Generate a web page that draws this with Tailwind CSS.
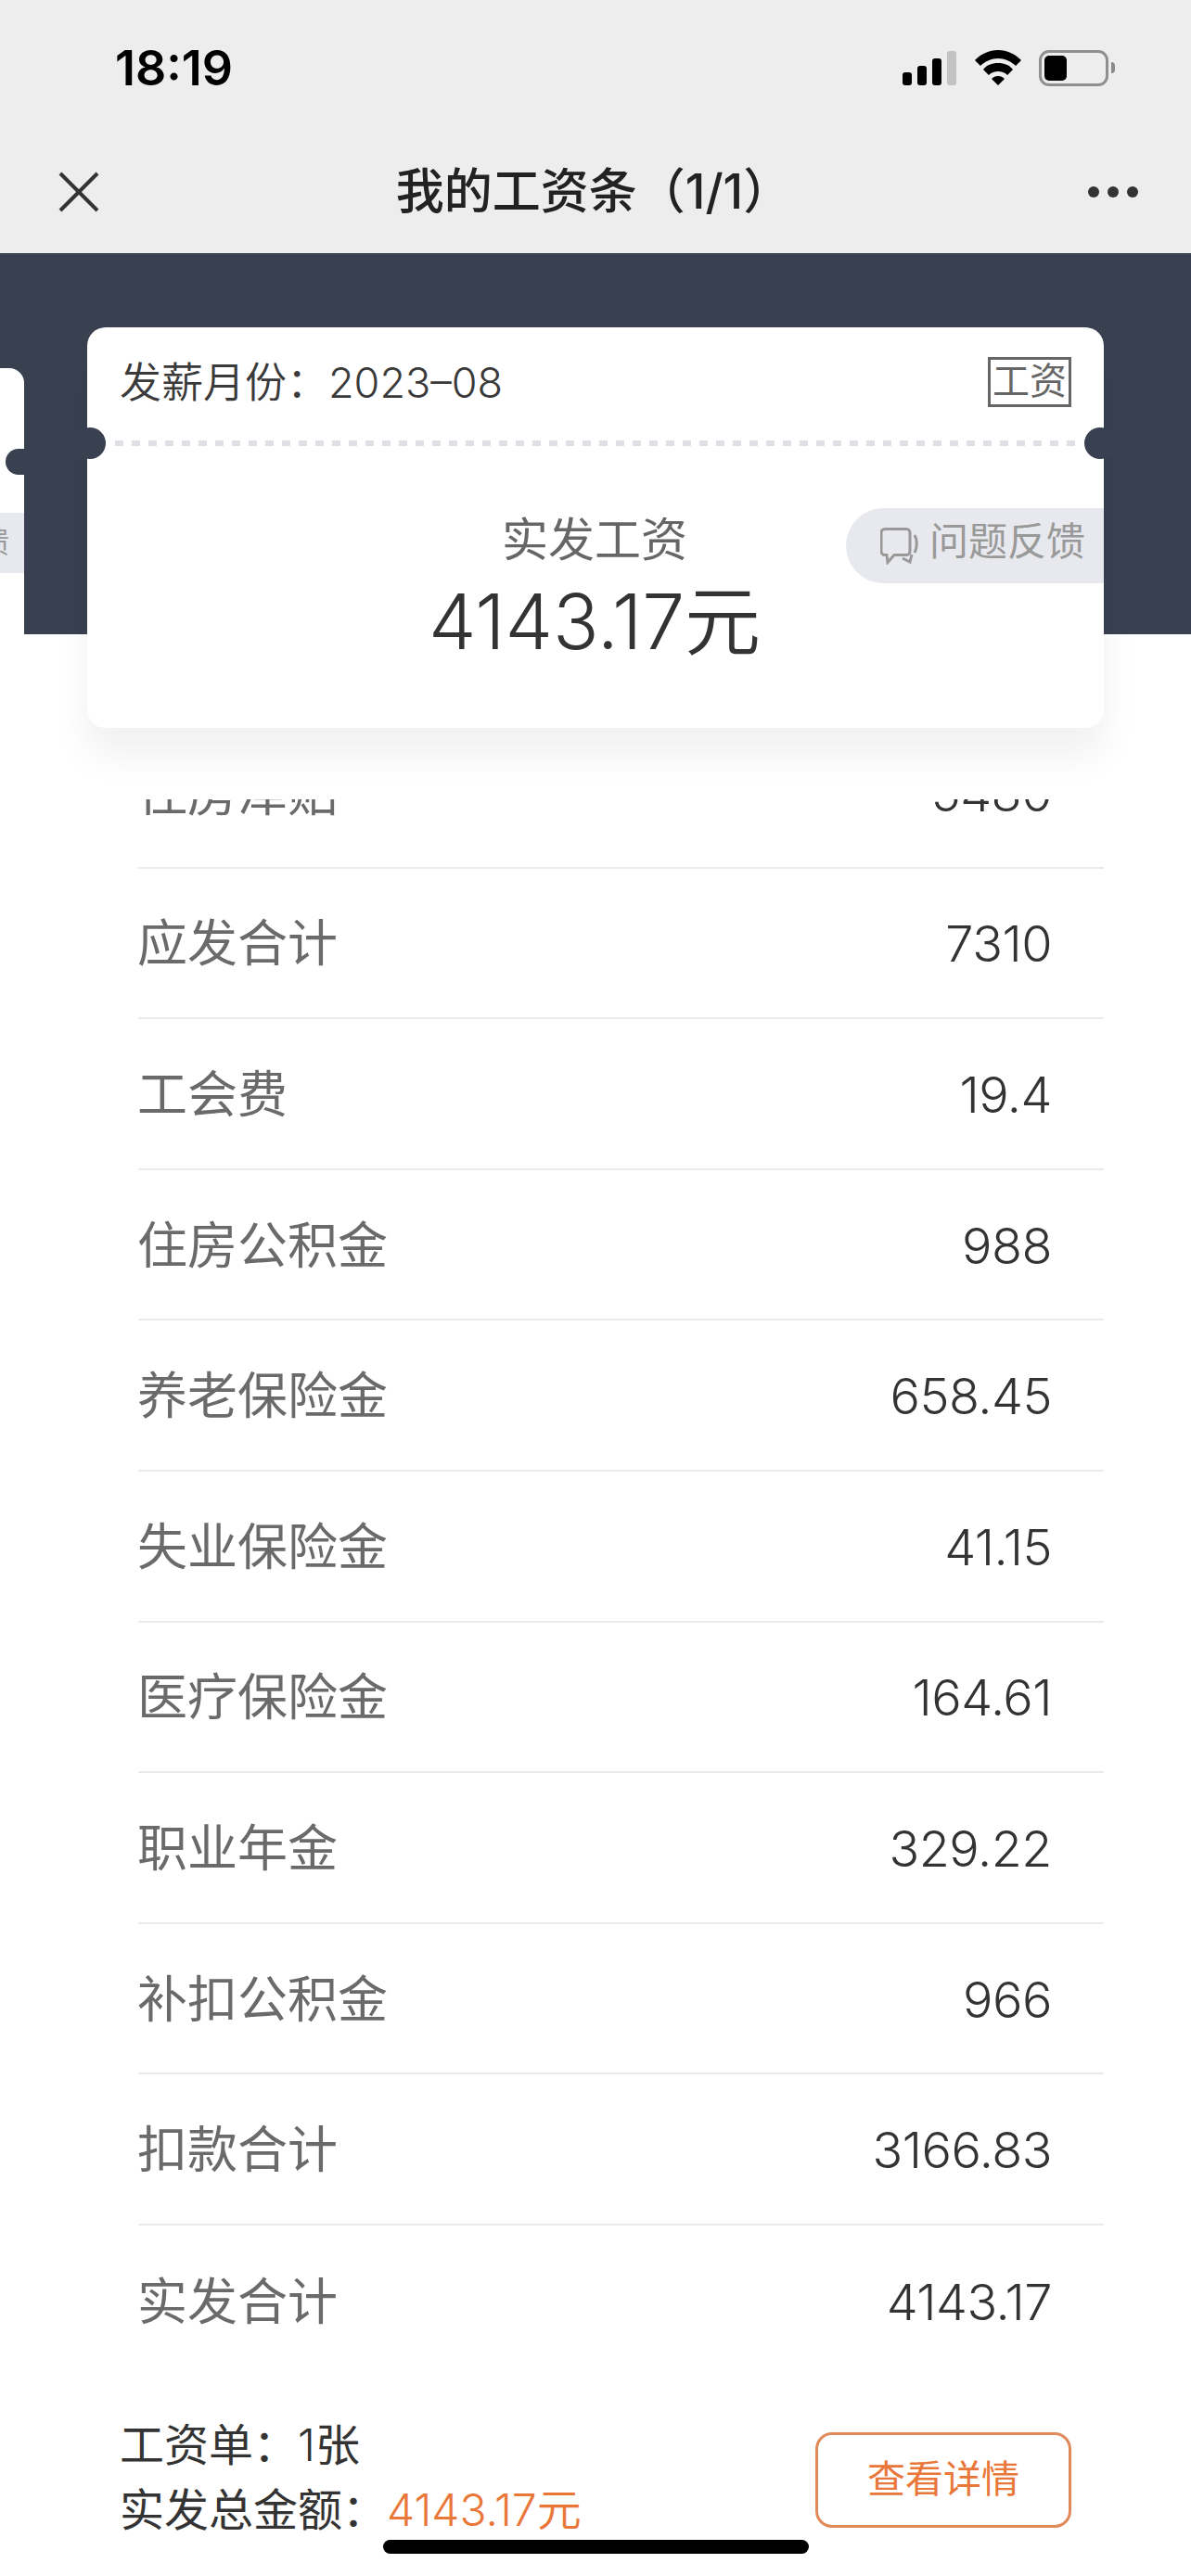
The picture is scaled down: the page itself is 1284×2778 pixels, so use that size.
<!DOCTYPE html><html lang="zh-CN"><head>
<meta charset="UTF-8">
<title>我的工资条</title>
<meta name="viewport" content="width=device-width,initial-scale=1">
<script src="https://cdn.jsdelivr.net/npm/@tailwindcss/browser@4"></script>
</head><body class="w-[1284px] h-[2778px] overflow-hidden relative bg-white text-[#333] font-['Inter','Noto_Sans_CJK_SC',sans-serif]">

<!-- status + nav -->
<header class="h-[273px] bg-[#ededed] flex flex-col">
  <div class="h-[146px] pl-[124px] pr-[82px] flex items-center justify-between">
    <span class="text-[52px] font-semibold leading-none text-black pt-[2px]">18:19</span>
    <div class="flex items-center gap-[20px]">
      <svg width="58" height="37" viewBox="0 0 58 37"><rect x="0" y="23" width="10" height="14" rx="3"/><rect x="16" y="16" width="10" height="21" rx="3"/><rect x="32" y="8" width="10" height="29" rx="3"/><rect x="48" y="0" width="10" height="37" rx="3" fill="#c2c2c2"/></svg>
      <svg width="50" height="38" viewBox="0 0 50 38"><path d="M25 0C15 0 7 4 0 11L6 17C11 12 18 9 25 9S39 12 44 17L50 11C43 4 35 0 25 0ZM25 14C18 14 13 16 9 21L15 27C18 24 21 23 25 23S32 24 35 27L41 21C37 16 32 14 25 14ZM25 28C22 28 20 29 18 31L25 38L32 31C30 29 28 28 25 28Z"/></svg>
      <div class="flex items-center -ml-px">
        <div class="w-[75px] h-[39px] rounded-[11px] border-[3px] border-[#8f8f8f] p-[3px]"><div class="w-[24px] h-full bg-black rounded-[5px]"></div></div>
        <div class="w-[4px] h-[12px] bg-[#888] rounded-r-full ml-[3px]"></div>
      </div>
    </div>
  </div>
  <div class="h-[127px] pl-[63px] pr-[57px] pb-[5px] flex items-center justify-between">
    <svg width="44" height="44" viewBox="0 0 44 44" stroke="#333" stroke-width="4"><path d="M2 2l40 40M42 2L2 42"/></svg>
    <h1 class="text-[52px] font-medium leading-none text-[#222]">我的工资条（1/1）</h1>
    <div class="flex gap-[9px]"><i class="w-[12px] h-[12px] rounded-full bg-[#333]"></i><i class="w-[12px] h-[12px] rounded-full bg-[#333]"></i><i class="w-[12px] h-[12px] rounded-full bg-[#333]"></i></div>
  </div>
</header>

<!-- dark band -->
<div class="h-[411px] bg-[#394050]"></div>

<!-- card carousel -->
<div class="-mt-[331px] h-[432px] relative z-10 flex items-center gap-[68px] -ml-[1070px]">
  <!-- previous slip, cut off by the window -->
  <div class="relative w-[1096px] h-[345px] shrink-0 bg-white rounded-[16px]">
    <div class="absolute -right-[13px] top-[87px] w-[33px] h-[28px] rounded-full bg-[#394050]"></div>
    <div class="absolute right-0 top-[156px] w-[220px] h-[65px] bg-[#e8e9ee] pr-[16px] flex items-center justify-end text-[32px] text-[#999] whitespace-nowrap">问题反馈</div>
  </div>
  <!-- current slip -->
  <div class="relative w-[1096px] h-[432px] shrink-0 bg-white rounded-[20px] shadow-[0_30px_40px_rgba(0,0,0,0.06)]">
    <div class="h-[122px] px-[35px] pb-[4px] flex items-center justify-between">
      <span class="text-[45px] leading-none text-[#3a3a3a] font-[350]">发薪月份：2023–08</span>
      <span class="border-[3px] border-[#666] text-[40px] leading-[46px] h-[54px] w-[90px] text-center text-[#666] whitespace-nowrap">工资</span>
    </div>
    <div class="mx-[30px] h-[6px] bg-[repeating-linear-gradient(90deg,#dfe0e6_0_9px,transparent_9px_18px)]"></div>
    <div class="absolute -left-[14px] top-[108px] w-[34px] h-[34px] rounded-full bg-[#394050]"></div>
    <div class="absolute -right-[13px] top-[108px] w-[34px] h-[34px] rounded-full bg-[#394050]"></div>
    <div class="absolute right-0 top-[195px] h-[81px] w-[278px] rounded-l-full bg-[#e8e9ee] pl-[37px] flex items-center gap-[11px] text-[#999] text-[42px]">
      <svg width="42" height="40" viewBox="0 0 42 40" fill="none" stroke="#999" stroke-width="3"><path d="M5 1.5h23a4 4 0 0 1 4 4v20a4 4 0 0 1-4 4H15l-7 8-1-8H5a4 4 0 0 1-4-4V5.5a4 4 0 0 1 4-4z"/><path d="M37 8c3 5 3 13 0 19M24 33l8 4 2-8"/></svg>
      <span class="whitespace-nowrap pb-[10px]">问题反馈</span>
    </div>
    <div class="flex flex-col items-center pt-[71px] pr-[2px]">
      <span class="text-[50px] leading-[60px] text-[#666]">实发工资</span>
      <span class="text-[82px] leading-[90px] text-[#333] font-[350] mt-[14px]">4143.17元</span>
    </div>
  </div>
</div>

<!-- detail rows -->
<div class="mt-[77px] h-[1700px] overflow-hidden pl-[149px] pr-[94px]">
  <div class="-mt-[88px]">
    <div class="h-[162.6px] border-b-2 border-[#ebebeb] pt-[2px] pr-[56px] flex items-center justify-between text-[54px] font-[350] tracking-[-0.5px]"><span class="text-[#6a6a6a] font-normal tracking-normal -ml-px">住房津贴</span><span>5480</span></div>
    <div class="h-[162.6px] border-b-2 border-[#ebebeb] pt-[2px] pr-[56px] flex items-center justify-between text-[54px] font-[350] tracking-[-0.5px]"><span class="text-[#6a6a6a] font-normal tracking-normal -ml-px">应发合计</span><span>7310</span></div>
    <div class="h-[162.6px] border-b-2 border-[#ebebeb] pt-[2px] pr-[56px] flex items-center justify-between text-[54px] font-[350] tracking-[-0.5px]"><span class="text-[#6a6a6a] font-normal tracking-normal -ml-px">工会费</span><span>19.4</span></div>
    <div class="h-[162.6px] border-b-2 border-[#ebebeb] pt-[2px] pr-[56px] flex items-center justify-between text-[54px] font-[350] tracking-[-0.5px]"><span class="text-[#6a6a6a] font-normal tracking-normal -ml-px">住房公积金</span><span>988</span></div>
    <div class="h-[162.6px] border-b-2 border-[#ebebeb] pt-[2px] pr-[56px] flex items-center justify-between text-[54px] font-[350] tracking-[-0.5px]"><span class="text-[#6a6a6a] font-normal tracking-normal -ml-px">养老保险金</span><span>658.45</span></div>
    <div class="h-[162.6px] border-b-2 border-[#ebebeb] pt-[2px] pr-[56px] flex items-center justify-between text-[54px] font-[350] tracking-[-0.5px]"><span class="text-[#6a6a6a] font-normal tracking-normal -ml-px">失业保险金</span><span>41.15</span></div>
    <div class="h-[162.6px] border-b-2 border-[#ebebeb] pt-[2px] pr-[56px] flex items-center justify-between text-[54px] font-[350] tracking-[-0.5px]"><span class="text-[#6a6a6a] font-normal tracking-normal -ml-px">医疗保险金</span><span>164.61</span></div>
    <div class="h-[162.6px] border-b-2 border-[#ebebeb] pt-[2px] pr-[56px] flex items-center justify-between text-[54px] font-[350] tracking-[-0.5px]"><span class="text-[#6a6a6a] font-normal tracking-normal -ml-px">职业年金</span><span>329.22</span></div>
    <div class="h-[162.6px] border-b-2 border-[#ebebeb] pt-[2px] pr-[56px] flex items-center justify-between text-[54px] font-[350] tracking-[-0.5px]"><span class="text-[#6a6a6a] font-normal tracking-normal -ml-px">补扣公积金</span><span>966</span></div>
    <div class="h-[162.6px] border-b-2 border-[#ebebeb] pt-[2px] pr-[56px] flex items-center justify-between text-[54px] font-[350] tracking-[-0.5px]"><span class="text-[#6a6a6a] font-normal tracking-normal -ml-px">扣款合计</span><span>3166.83</span></div>
    <div class="h-[162.6px] pt-[2px] pr-[56px] flex items-center justify-between text-[54px] font-[350] tracking-[-0.5px]"><span class="text-[#6a6a6a] font-normal tracking-normal -ml-px">实发合计</span><span>4143.17</span></div>
  </div>
</div>

<!-- footer summary -->
<footer class="mt-[44px] px-[129px] flex items-center justify-between">
  <div class="text-[48px] leading-[70px] text-[#333] -mt-[4px]">
    <div>工资单：<span class="font-[350]">1</span>张</div>
    <div>实发总金额：<span class="text-[#e9773a] font-[350]">4143.17元</span></div>
  </div>
  <div class="w-[276px] h-[103px] rounded-[18px] border-[3px] border-[#e08a5a] flex items-center justify-center text-[41px] text-[#e9773a]">查看详情</div>
</footer>

<!-- home indicator -->
<div class="absolute left-[413px] top-[2739px] w-[459px] h-[15px] rounded-full bg-black"></div>
</body></html>
